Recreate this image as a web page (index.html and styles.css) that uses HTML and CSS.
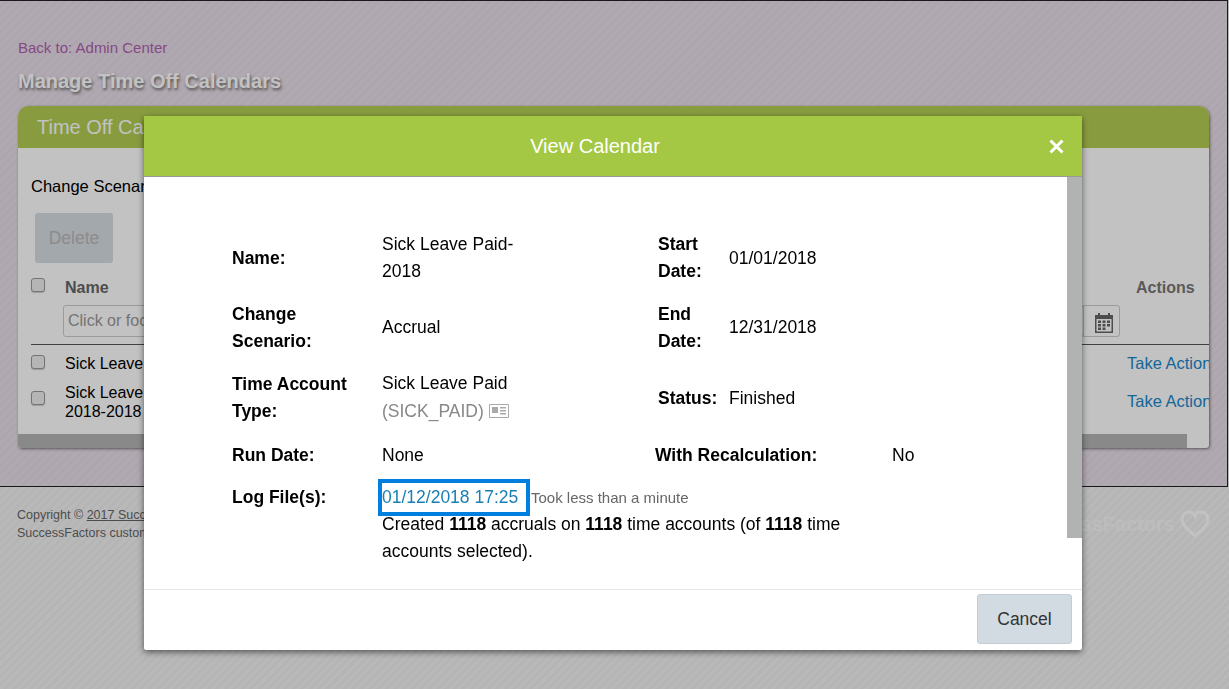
FILE: index.html
```html
<!DOCTYPE html>
<html lang="en">
<head>
  <meta charset="UTF-8">
  <title>Manage Time Off Calendars</title>
  <link rel="stylesheet" href="styles.css">
</head>
<body>
  <div class="page-top">
    <a class="back-link" href="#">Back to: Admin Center</a>
    <h1>Manage Time Off Calendars</h1>
    <div class="card">
      <div class="card-head">Time Off Calendars</div>
      <div class="card-body">
        <div class="scenario">Change Scenario</div>
        <button class="btn-delete">Delete</button>
        <div class="table-head">
          <span class="check"></span>
          <div class="name-col">
            <div class="col-title">Name</div>
            <input class="filter" placeholder="Click or focus to filter">
          </div>
          <button class="cal-btn">
            <svg width="18" height="20" viewBox="0 0 18 20">
              <path fill="#666" d="M3 0h2v2h8V0h2v2h3v18H0V2h3zM1.500 6v12.500h15V6z"/>
              <path fill="#666" d="M3 7.500h3v2.500H3zM7.500 7.500h3v2.500h-3zM12 7.500h3v2.500h-3zM3 11h3v2.500H3zM7.500 11h3v2.500h-3zM12 11h3v2.500h-3zM3 14.500h3V17H3zM7.500 14.500h3V17h-3z"/>
            </svg>
          </button>
          <div class="actions-title">Actions</div>
        </div>
        <div class="table-row row-one">
          <span class="check"></span>
          <div class="row-name">Sick Leave Paid-2018</div>
          <a class="take" href="#">Take Action</a>
        </div>
        <div class="table-row row-two">
          <span class="check"></span>
          <div class="row-name">Sick Leave Paid-<br>2018-2018</div>
          <a class="take" href="#">Take Action</a>
        </div>
      </div>
      <div class="card-scroll"><div class="card-thumb"></div></div>
    </div>
  </div>

  <div class="page-foot">
    <div class="copyright">
      Copyright © <u>2017 SuccessFactors, Inc.</u> All rights reserved.<br>
      SuccessFactors customer confidential.
    </div>
    <div class="brand">
      <span class="brand-name">SuccessFactors</span>
      <svg width="30" height="28" viewBox="0 0 30 28"><path fill="none" stroke="#fff" stroke-width="3" d="M15 25.500C8 20 2 15 2 9c0-4 3-7 7-7 3 0 5 1.500 6 4 1-2.500 3-4 6-4 4 0 7 3 7 7 0 6-6 11-13 16.500z"/></svg>
    </div>
  </div>

  <div class="overlay"></div>

  <div class="dialog">
    <div class="dialog-head">
      <span>View Calendar</span>
      <svg class="close" width="15" height="15" viewBox="0 0 15 15"><path stroke="#fff" stroke-width="3" d="M1.500 1.500l12 12M13.500 1.500l-12 12"/></svg>
    </div>
    <div class="dialog-body">
      <div class="scroll-thumb"></div>
      <div class="info-row row-h54">
        <div class="lbl">Name:</div>
        <div class="val narrow">Sick Leave Paid-2018</div>
        <div class="lbl lbl-small">Start Date:</div>
        <div class="val">01/01/2018</div>
      </div>
      <div class="info-row row-h54">
        <div class="lbl">Change Scenario:</div>
        <div class="val narrow">Accrual</div>
        <div class="lbl lbl-small">End Date:</div>
        <div class="val">12/31/2018</div>
      </div>
      <div class="info-row row-type">
        <div class="lbl">Time Account Type:</div>
        <div class="val narrow">Sick Leave Paid<br>
          <span class="muted">(SICK_PAID)</span>
          <svg class="card-icon" width="20" height="14" viewBox="0 0 20 14"><path fill="none" stroke="#aaa" d="M.5.500h19v13H.5z"/><path fill="#aaa" d="M3 3h6v6H3zM11 3h6v1.500h-6zM11 6h6v1.500h-6zM11 9h6v1.500h-6z"/></svg>
        </div>
        <div class="lbl lbl-small">Status:</div>
        <div class="val">Finished</div>
      </div>
      <div class="info-row row-run">
        <div class="lbl">Run Date:</div>
        <div class="val narrow">None</div>
        <div class="lbl lbl-wide">With Recalculation:</div>
        <div class="val">No</div>
      </div>
      <div class="info-row row-log">
        <div class="lbl">Log File(s):</div>
        <div class="val log-val">
          <div class="log-line">
            <a class="log-link" href="#">01/12/2018 17:25</a>
            <span class="took">Took less than a minute</span>
          </div>
          <div class="log-summary">Created <b>1118</b> accruals on <b>1118</b> time accounts (of <b>1118</b> time accounts selected).</div>
        </div>
      </div>
    </div>
    <div class="dialog-foot">
      <button class="btn-cancel">Cancel</button>
    </div>
  </div>
</body>
</html>
```

FILE: styles.css
```css
html, body {
  height: 100%;
}
body {
  margin: 0;
  font-family: "Liberation Sans", Arial, sans-serif;
  font-size: 17.500px;
  color: #000;
  background: repeating-linear-gradient(135deg, #f4f4f4 0, #f4f4f4 3px, #eeeeee 3px, #eeeeee 6px);
  overflow: hidden;
}
.page-top {
  box-sizing: border-box;
  width: 1228px;
  height: 487px;
  padding: 39px 18px 0;
  border-top: 1px solid #222;
  border-right: 1px solid #222;
  border-bottom: 1px solid #222;
  background: repeating-linear-gradient(135deg, #e9dfe9 0, #e9dfe9 3px, #e5dbe5 3px, #e5dbe5 6px);
}
.back-link {
  display: block;
  font-size: 15px;
  line-height: 16px;
  color: #b060b0;
  text-decoration: none;
}
h1 {
  margin: 13px 0 13px;
  font-size: 20px;
  line-height: 24px;
  color: #fff;
  text-shadow: 1px 2px 3px #666;
}
.card {
  width: 1191px;
  height: 342px;
  border-radius: 10px 10px 3px 3px;
  background: #fff;
  box-shadow: 1px 1px 3px rgba(0,0,0,.5);
  overflow: hidden;
  display: flex;
  flex-direction: column;
}
.card-head {
  height: 42px;
  padding-left: 19px;
  line-height: 42px;
  font-size: 20px;
  color: #fff;
  background: #b3cd54;
}
.card-body {
  flex: 1;
  padding: 28px 0 0 13px;
}
.scenario {
  font-size: 16.500px;
  line-height: 20px;
}
.btn-delete {
  display: block;
  width: 78px;
  height: 50px;
  margin: 17px 0 15px 4px;
  border: none;
  border-radius: 3px;
  font: 17.500px "Liberation Sans", Arial, sans-serif;
  color: #b8b8b8;
  background: #d6dde3;
}
.check {
  display: block;
  box-sizing: border-box;
  width: 14px;
  height: 14px;
  border: 1px solid #999;
  border-radius: 3px;
  background: #eee;
  box-shadow: 0 1px 1px rgba(0,0,0,.2);
  flex: none;
}
.table-head {
  display: flex;
  box-sizing: border-box;
  height: 67px;
  width: 1178px;
  border-bottom: 1px solid #555;
}
.name-col {
  margin-left: 18px;
  flex: 1;
}
.col-title {
  padding-left: 2px;
  font-size: 16px;
  font-weight: bold;
  line-height: 20px;
  color: #666;
  margin-bottom: 7px;
}
.filter {
  box-sizing: border-box;
  width: 100%;
  height: 32px;
  padding: 0 4px;
  border: 1px solid #ccc;
  border-radius: 3px;
  font: 16px "Liberation Sans", Arial, sans-serif;
  background: #fff;
}
.filter::placeholder {
  color: #999;
}
.cal-btn {
  box-sizing: border-box;
  flex: none;
  width: 37px;
  height: 32px;
  margin-top: 27px;
  margin-left: -1px;
  padding: 0;
  border: 1px solid #ccc;
  border-radius: 0 3px 3px 0;
  background: #fff;
}
.cal-btn svg {
  display: block;
  margin: 4px auto 0 11px;
}
.actions-title {
  flex: none;
  width: 73px;
  margin-left: 16px;
  font-size: 16px;
  font-weight: bold;
  line-height: 20px;
  color: #777;
}
.table-row {
  display: flex;
  align-items: center;
  width: 1178px;
}
.row-one {
  height: 37px;
}
.row-two {
  height: 39px;
}
.row-one .check {
  margin-top: -4px;
}
.row-two .check {
  margin-top: -7px;
}
.row-name {
  margin-left: 20px;
  flex: 1;
  font-size: 16px;
  line-height: 19px;
}
.take {
  flex: none;
  width: 82px;
  font-size: 16.500px;
  color: #1a87c8;
  white-space: nowrap;
  text-decoration: none;
}
.card-scroll {
  height: 14px;
}
.card-thumb {
  width: 1169px;
  height: 14px;
  background: #b5b5b5;
}
.page-foot {
  display: flex;
  justify-content: space-between;
  align-items: center;
  width: 1210px;
  padding: 19px 0 0 17px;
  box-sizing: border-box;
}
.copyright {
  font-size: 12.500px;
  line-height: 18px;
  color: #666;
}
.brand {
  display: flex;
  align-items: center;
  gap: 5px;
  font-size: 20px;
  font-weight: bold;
  color: #fff;
}
.brand-name {
  opacity: .55;
}
.overlay {
  position: fixed;
  inset: 0;
  background: rgba(0,0,0,.24);
}
.dialog {
  position: absolute;
  left: 144px;
  top: 116px;
  width: 938px;
  height: 534px;
  display: flex;
  flex-direction: column;
  border-radius: 2px;
  background: #fff;
  box-shadow: 0 2px 6px rgba(0,0,0,.55);
}
.dialog-head {
  position: relative;
  flex: none;
  height: 60px;
  padding-right: 36px;
  line-height: 60px;
  text-align: center;
  font-size: 20px;
  color: #fff;
  background: #a4c843;
  border-bottom: 1px solid #999;
}
.close {
  position: absolute;
  right: 18px;
  top: 23px;
}
.dialog-body {
  flex: 1;
  position: relative;
  padding: 54px 0 0 88px;
}
.scroll-thumb {
  position: absolute;
  right: 0;
  top: 0;
  width: 15px;
  height: 361px;
  background: #b0b3b2;
}
.info-row {
  display: flex;
  align-items: center;
  line-height: 27px;
}
.row-h54 {
  height: 54px;
  margin-bottom: 15.500px;
}
.row-type {
  height: 56px;
  margin-bottom: 15px;
}
.row-type .narrow {
  margin-top: -2px;
  line-height: 28px;
}
.row-run {
  height: 28px;
  margin-bottom: 15px;
}
.row-log {
  align-items: flex-start;
}
.lbl {
  flex: none;
  box-sizing: border-box;
  width: 150px;
  padding-right: 16px;
  font-weight: bold;
}
.lbl-small {
  width: 71px;
  padding-right: 0;
  margin-left: 123px;
}
.lbl-wide {
  width: 237px;
  padding-right: 0;
  margin-left: 120px;
}
.val.narrow {
  width: 153px;
}
.log-val {
  width: 470px;
}
.log-line {
  display: flex;
  align-items: center;
  height: 27px;
}
.log-link {
  box-sizing: border-box;
  flex: none;
  width: 142px;
  height: 27px;
  margin-left: 1px;
  text-indent: -1px;
  line-height: 27px;
  outline: 4px solid #007fdf;
  outline-offset: 1px;
  color: #1a7fb5;
  text-decoration: none;
}
.took {
  margin-left: 6px;
  font-size: 15px;
  color: #666;
}
.muted {
  color: #888;
}
.card-icon {
  vertical-align: -1px;
}
.dialog-foot {
  flex: none;
  box-sizing: border-box;
  height: 61px;
  padding: 4px 10px 0 0;
  border-top: 1px solid #e5e5e5;
  display: flex;
  justify-content: flex-end;
}
.btn-cancel {
  box-sizing: border-box;
  width: 95px;
  height: 50px;
  border: 1px solid #c5ccd3;
  border-radius: 3px;
  font: 17.500px "Liberation Sans", Arial, sans-serif;
  color: #333;
  background: #d2dae2;
}
```
